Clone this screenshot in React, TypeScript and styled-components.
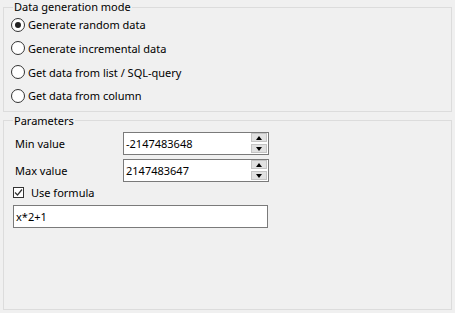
import React from 'react';
import styled, { createGlobalStyle } from 'styled-components';

const Global = createGlobalStyle`
  html, body { margin: 0; padding: 0; background: #f0f0f0; }
  body {
    font-family: "Noto Sans", "Open Sans", sans-serif;
    font-size: 11px;
    color: #000;
  }
`;

const Page = styled.div`
  width: 455px;
  height: 313px;
  box-sizing: border-box;
  padding: 0 3px 3px 3px;
  display: flex;
  flex-direction: column;
  gap: 2px;
`;

const Group = styled.fieldset<{ $grow?: boolean }>`
  margin: 0;
  min-width: 0;
  border: 1px solid #dcdcdc;
  padding: 0 8px 0 9px;
  flex: ${(p) => (p.$grow ? '1' : 'none')};
  display: flex;
  flex-direction: column;
`;

const Legend = styled.legend`
  padding: 0 1px;
  line-height: 14px;
  height: 14px;
`;

const RadioList = styled.div`
  display: flex;
  flex-direction: column;
  padding: 0 0 3px 0;
  margin: -1px 0 0 -2px;
`;

const RadioRow = styled.label`
  display: flex;
  align-items: center;
  height: 23.67px;
  gap: 3px;
`;

const RadioCircle = styled.span<{ $checked?: boolean }>`
  width: 12px;
  height: 12px;
  border: 1px solid #333;
  border-radius: 50%;
  background: #fff;
  display: flex;
  align-items: center;
  justify-content: center;
  &::after {
    content: '';
    width: 6px;
    height: 6px;
    border-radius: 50%;
    background: ${(p) => (p.$checked ? '#222' : 'transparent')};
  }
`;

const ParamGrid = styled.div`
  display: grid;
  grid-template-columns: 110px 146px;
  row-gap: 4px;
  margin-top: 4px;
  align-items: center;
`;

const FieldLabel = styled.span`
  padding-left: 2px;
`;

const SpinBox = styled.div`
  height: 23px;
  box-sizing: border-box;
  border: 1px solid #7a7a7a;
  background: #fff;
  display: flex;
  align-items: center;
  padding: 0 1px 0 2px;
`;

const SpinText = styled.span`
  flex: 1;
`;

const SpinButtons = styled.div`
  display: flex;
  flex-direction: column;
  gap: 2px;
`;

const SpinButton = styled.div`
  width: 16px;
  height: 9px;
  box-sizing: border-box;
  background: #e1e1e1;
  border: 1px solid #c4c4c4;
  display: flex;
  align-items: center;
  justify-content: center;
`;

const Triangle = styled.span<{ $down?: boolean }>`
  width: 0;
  height: 0;
  border-left: 3.5px solid transparent;
  border-right: 3.5px solid transparent;
  ${(p) => (p.$down ? 'border-top: 4px solid #000;' : 'border-bottom: 4px solid #000;')}
`;

const CheckRow = styled.label`
  display: flex;
  align-items: center;
  gap: 7px;
  height: 20px;
  margin-top: 1px;
`;

const CheckBox = styled.span`
  width: 11px;
  height: 11px;
  box-sizing: border-box;
  border: 1px solid #333;
  background: #fff;
  display: flex;
  align-items: center;
  justify-content: center;
`;

const TextInput = styled.div`
  width: 255px;
  height: 23px;
  box-sizing: border-box;
  border: 1px solid #7a7a7a;
  background: #fff;
  display: flex;
  align-items: center;
  padding-left: 2px;
  margin-top: 2px;
`;

function Spin({ value }: { value: string }) {
  return (
    <SpinBox>
      <SpinText>{value}</SpinText>
      <SpinButtons>
        <SpinButton><Triangle /></SpinButton>
        <SpinButton><Triangle $down /></SpinButton>
      </SpinButtons>
    </SpinBox>
  );
}

export default function App() {
  const modes = [
    'Generate random data',
    'Generate incremental data',
    'Get data from list / SQL-query',
    'Get data from column',
  ];
  return (
    <>
      <Global />
      <Page>
        <Group>
          <Legend>Data generation mode</Legend>
          <RadioList>
            {modes.map((m, i) => (
              <RadioRow key={m}>
                <RadioCircle $checked={i === 0} />
                {m}
              </RadioRow>
            ))}
          </RadioList>
        </Group>
        <Group $grow>
          <Legend>Parameters</Legend>
          <ParamGrid>
            <FieldLabel>Min value</FieldLabel>
            <Spin value="-2147483648" />
            <FieldLabel>Max value</FieldLabel>
            <Spin value="2147483647" />
          </ParamGrid>
          <CheckRow>
            <CheckBox>
              <svg width="9" height="9" viewBox="0 0 9 9">
                <path d="M1 4.5 L3.5 7 L8 1.5" fill="none" stroke="#333" strokeWidth="1.2" />
              </svg>
            </CheckBox>
            Use formula
          </CheckRow>
          <TextInput>x*2+1</TextInput>
        </Group>
      </Page>
    </>
  );
}
